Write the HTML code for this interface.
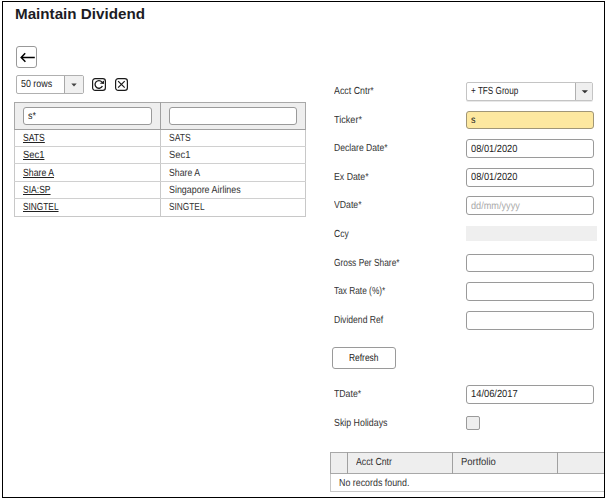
<!DOCTYPE html>
<html><head><meta charset="utf-8">
<style>
html,body{margin:0;padding:0;background:#fff;width:607px;height:500px;overflow:hidden}
body{font-family:"Liberation Sans",sans-serif;color:#333;position:relative}
.a{position:absolute;box-sizing:border-box}
.t{position:absolute;white-space:nowrap;line-height:12px;transform-origin:0 0}
.inp{position:absolute;box-sizing:border-box;border:1px solid #9a9a9a;border-radius:3px;background:#fff}
</style></head><body>
<div class="a" style="left:2px;top:1px;width:603px;height:497px;border:1px solid #000"></div>

<!-- back button -->
<div class="a" style="left:16px;top:46px;width:21px;height:22px;border:1px solid #999;border-radius:3px">
<svg width="19" height="20" style="position:absolute;left:0;top:0">
<path d="M4.3 10.5 H17.8 M8.2 6.3 L4.2 10.5 L8.4 14.7" stroke="#000" stroke-width="1.5" fill="none"/>
</svg>
</div>

<!-- rows select -->
<div class="a" style="left:16px;top:75px;width:68px;height:19px;border:1px solid #b0b0b0;border-radius:2px;background:#fff"></div>
<div class="a" style="left:64px;top:76px;width:19px;height:17px;border-left:1px solid #a8a8a8;background:#f0f0f0"></div>
<svg class="a" style="left:71px;top:83px" width="6" height="4"><path d="M0.3 0.4 L5.7 0.4 L3 3.6Z" fill="#444"/></svg>

<!-- refresh / close icons -->
<svg class="a" style="left:91px;top:77px" width="16" height="15">
<rect x="1.6" y="1.6" width="12.8" height="11.8" rx="2.6" fill="none" stroke="#1a1a1a" stroke-width="1.2"/>
<path d="M11.39 9.03 A3.85 3.85 0 1 1 10.85 4.93" stroke="#1a1a1a" stroke-width="1.3" fill="none"/>
<path d="M8.7 6.6 L13.1 3.6 L12.9 7.1 Z" fill="#1a1a1a"/>
</svg>
<svg class="a" style="left:114px;top:77px" width="16" height="15">
<rect x="1.6" y="1.7" width="11.8" height="11.7" rx="2.6" fill="none" stroke="#1a1a1a" stroke-width="1.2"/>
<path d="M4.1 4.1 L10.7 10.7 M10.7 4.1 L4.1 10.7" stroke="#1a1a1a" stroke-width="1.2" fill="none"/>
</svg>

<!-- left table -->
<div class="a" style="left:14px;top:102px;width:292px;height:115px;border:1px solid #c8c8c8;background:#fff"></div>
<div class="a" style="left:14px;top:102px;width:292px;height:28px;border:1px solid #a8a8a8;border-bottom-color:#a0a0a0;background:#eeeeee"></div>
<div class="a" style="left:160px;top:102px;width:1px;height:115px;background:#c8c8c8"></div>
<div class="a" style="left:160px;top:102px;width:1px;height:28px;background:#a0a0a0"></div>
<div class="a" style="left:14px;top:146px;width:292px;height:1px;background:#d0d0d0"></div>
<div class="a" style="left:14px;top:163px;width:292px;height:1px;background:#d0d0d0"></div>
<div class="a" style="left:14px;top:181px;width:292px;height:1px;background:#d0d0d0"></div>
<div class="a" style="left:14px;top:198px;width:292px;height:1px;background:#d0d0d0"></div>
<div class="inp" style="left:23px;top:107px;width:129px;height:18px"></div>
<div class="inp" style="left:169px;top:107px;width:128px;height:18px"></div>

<!-- form inputs -->
<div class="a" style="left:466px;top:82px;width:127px;height:19px;border:1px solid #c4c4c4;border-radius:2px;background:#fff;box-shadow:0 1px 0 #e8e8e8"></div>
<div class="a" style="left:575px;top:83px;width:17px;height:17px;border-left:1px solid #b0b0b0;background:#efefef"></div>
<svg class="a" style="left:581px;top:90px" width="8" height="4"><path d="M0.7 0.2 L7 0.2 L3.85 3.3Z" fill="#333"/></svg>

<div class="inp" style="left:466px;top:111px;width:128px;height:18px;background:#fde8a0;border-color:#a09677"></div>
<div class="inp" style="left:466px;top:139px;width:128px;height:19px"></div>
<div class="inp" style="left:466px;top:168px;width:128px;height:19px"></div>
<div class="inp" style="left:466px;top:196px;width:128px;height:19px"></div>
<div class="a" style="left:466px;top:226px;width:131px;height:15px;background:#efefef"></div>
<div class="inp" style="left:466px;top:254px;width:128px;height:18px"></div>
<div class="inp" style="left:466px;top:282px;width:128px;height:19px"></div>
<div class="inp" style="left:466px;top:311px;width:128px;height:19px"></div>
<div class="inp" style="left:332px;top:347px;width:64px;height:22px"></div>
<div class="inp" style="left:466px;top:385px;width:128px;height:19px"></div>
<div class="a" style="left:466px;top:416px;width:14px;height:14px;border:1px solid #9a9a9a;border-radius:2px;background:#eeeeee"></div>

<!-- bottom grid -->
<div class="a" style="left:330px;top:452px;width:280px;height:40px;border:1px solid #c8c8c8;background:#fff"></div>
<div class="a" style="left:330px;top:452px;width:280px;height:22px;border:1px solid #a8a8a8;background:#eeeeee"></div>
<div class="a" style="left:347px;top:452px;width:1px;height:22px;background:#a0a0a0"></div>
<div class="a" style="left:452px;top:452px;width:1px;height:22px;background:#a0a0a0"></div>
<div class="a" style="left:557px;top:452px;width:1px;height:22px;background:#a0a0a0"></div>

<div class="t" style="left:15.00px;top:8.00px;font-size:15.2px;transform:scaleX(1.0);color:#1c1c24;font-weight:bold;">Maintain Dividend</div>
<div class="t" style="left:21.00px;top:79.00px;font-size:10.25px;transform:scaleX(0.868);color:#222;text-rendering:geometricPrecision;">50 rows</div>
<div class="t" style="left:28.00px;top:111.00px;font-size:10.25px;transform:scaleX(0.878);color:#222;text-rendering:geometricPrecision;">s*</div>
<div class="t" style="left:23.00px;top:133.00px;font-size:10.25px;transform:scaleX(0.839);color:#222;text-decoration:underline;text-rendering:geometricPrecision;">SATS</div>
<div class="t" style="left:23.00px;top:150.00px;font-size:10.25px;transform:scaleX(0.917);color:#222;text-decoration:underline;text-rendering:geometricPrecision;">Sec1</div>
<div class="t" style="left:23.00px;top:168.00px;font-size:10.25px;transform:scaleX(0.849);color:#222;text-decoration:underline;text-rendering:geometricPrecision;">Share A</div>
<div class="t" style="left:23.00px;top:185.00px;font-size:10.25px;transform:scaleX(0.834);color:#222;text-decoration:underline;text-rendering:geometricPrecision;">SIA:SP</div>
<div class="t" style="left:23.00px;top:202.00px;font-size:10.25px;transform:scaleX(0.81);color:#222;text-decoration:underline;text-rendering:geometricPrecision;">SINGTEL</div>
<div class="t" style="left:169.00px;top:133.00px;font-size:10.25px;transform:scaleX(0.839);color:#333;text-rendering:geometricPrecision;">SATS</div>
<div class="t" style="left:169.00px;top:150.00px;font-size:10.25px;transform:scaleX(0.917);color:#333;text-rendering:geometricPrecision;">Sec1</div>
<div class="t" style="left:169.00px;top:168.00px;font-size:10.25px;transform:scaleX(0.849);color:#333;text-rendering:geometricPrecision;">Share A</div>
<div class="t" style="left:169.00px;top:185.00px;font-size:10.25px;transform:scaleX(0.868);color:#333;text-rendering:geometricPrecision;">Singapore Airlines</div>
<div class="t" style="left:169.00px;top:202.00px;font-size:10.25px;transform:scaleX(0.81);color:#333;text-rendering:geometricPrecision;">SINGTEL</div>
<div class="t" style="left:334.00px;top:86.00px;font-size:10.25px;transform:scaleX(0.862);color:#333;text-rendering:geometricPrecision;">Acct Cntr*</div>
<div class="t" style="left:334.00px;top:115.00px;font-size:10.25px;transform:scaleX(0.888);color:#333;text-rendering:geometricPrecision;">Ticker*</div>
<div class="t" style="left:334.00px;top:143.00px;font-size:10.25px;transform:scaleX(0.84);color:#333;text-rendering:geometricPrecision;">Declare Date*</div>
<div class="t" style="left:334.00px;top:172.00px;font-size:10.25px;transform:scaleX(0.855);color:#333;text-rendering:geometricPrecision;">Ex Date*</div>
<div class="t" style="left:334.00px;top:200.00px;font-size:10.25px;transform:scaleX(0.85);color:#333;text-rendering:geometricPrecision;">VDate*</div>
<div class="t" style="left:334.00px;top:229.00px;font-size:10.25px;transform:scaleX(0.829);color:#333;text-rendering:geometricPrecision;">Ccy</div>
<div class="t" style="left:334.00px;top:258.00px;font-size:10.25px;transform:scaleX(0.816);color:#333;text-rendering:geometricPrecision;">Gross Per Share*</div>
<div class="t" style="left:334.00px;top:286.00px;font-size:10.25px;transform:scaleX(0.811);color:#333;text-rendering:geometricPrecision;">Tax Rate (%)*</div>
<div class="t" style="left:334.00px;top:315.00px;font-size:10.25px;transform:scaleX(0.838);color:#333;text-rendering:geometricPrecision;">Dividend Ref</div>
<div class="t" style="left:334.00px;top:389.00px;font-size:10.25px;transform:scaleX(0.85);color:#333;text-rendering:geometricPrecision;">TDate*</div>
<div class="t" style="left:334.00px;top:418.00px;font-size:10.25px;transform:scaleX(0.861);color:#333;text-rendering:geometricPrecision;">Skip Holidays</div>
<div class="t" style="left:471.00px;top:86.00px;font-size:10.25px;transform:scaleX(0.796);color:#222;text-rendering:geometricPrecision;">+ TFS Group</div>
<div class="t" style="left:471.00px;top:115.00px;font-size:10.25px;transform:scaleX(0.878);color:#222;text-rendering:geometricPrecision;">s</div>
<div class="t" style="left:471.00px;top:144.00px;font-size:10.25px;transform:scaleX(0.905);color:#222;text-rendering:geometricPrecision;">08/01/2020</div>
<div class="t" style="left:471.00px;top:172.00px;font-size:10.25px;transform:scaleX(0.905);color:#222;text-rendering:geometricPrecision;">08/01/2020</div>
<div class="t" style="left:471.00px;top:201.00px;font-size:10.25px;transform:scaleX(0.893);color:#aaa;text-rendering:geometricPrecision;">dd/mm/yyyy</div>
<div class="t" style="left:471.00px;top:389.00px;font-size:10.25px;transform:scaleX(0.91);color:#222;text-rendering:geometricPrecision;">14/06/2017</div>
<div class="t" style="left:349.00px;top:353.00px;font-size:10.25px;transform:scaleX(0.82);color:#222;text-rendering:geometricPrecision;">Refresh</div>
<div class="t" style="left:356.00px;top:457.00px;font-size:10.25px;transform:scaleX(0.852);color:#333;text-rendering:geometricPrecision;">Acct Cntr</div>
<div class="t" style="left:461.00px;top:457.00px;font-size:10.25px;transform:scaleX(0.927);color:#333;text-rendering:geometricPrecision;">Portfolio</div>
<div class="t" style="left:339.00px;top:478.00px;font-size:10.25px;transform:scaleX(0.864);color:#333;text-rendering:geometricPrecision;">No records found.</div>
<div class="a" style="left:605px;top:0;width:2px;height:500px;background:#fff"></div>
<div class="a" style="left:604px;top:1px;width:1px;height:497px;background:#000"></div>
<div class="a" style="left:2px;top:497px;width:603px;height:1px;background:#000"></div>
</body></html>
